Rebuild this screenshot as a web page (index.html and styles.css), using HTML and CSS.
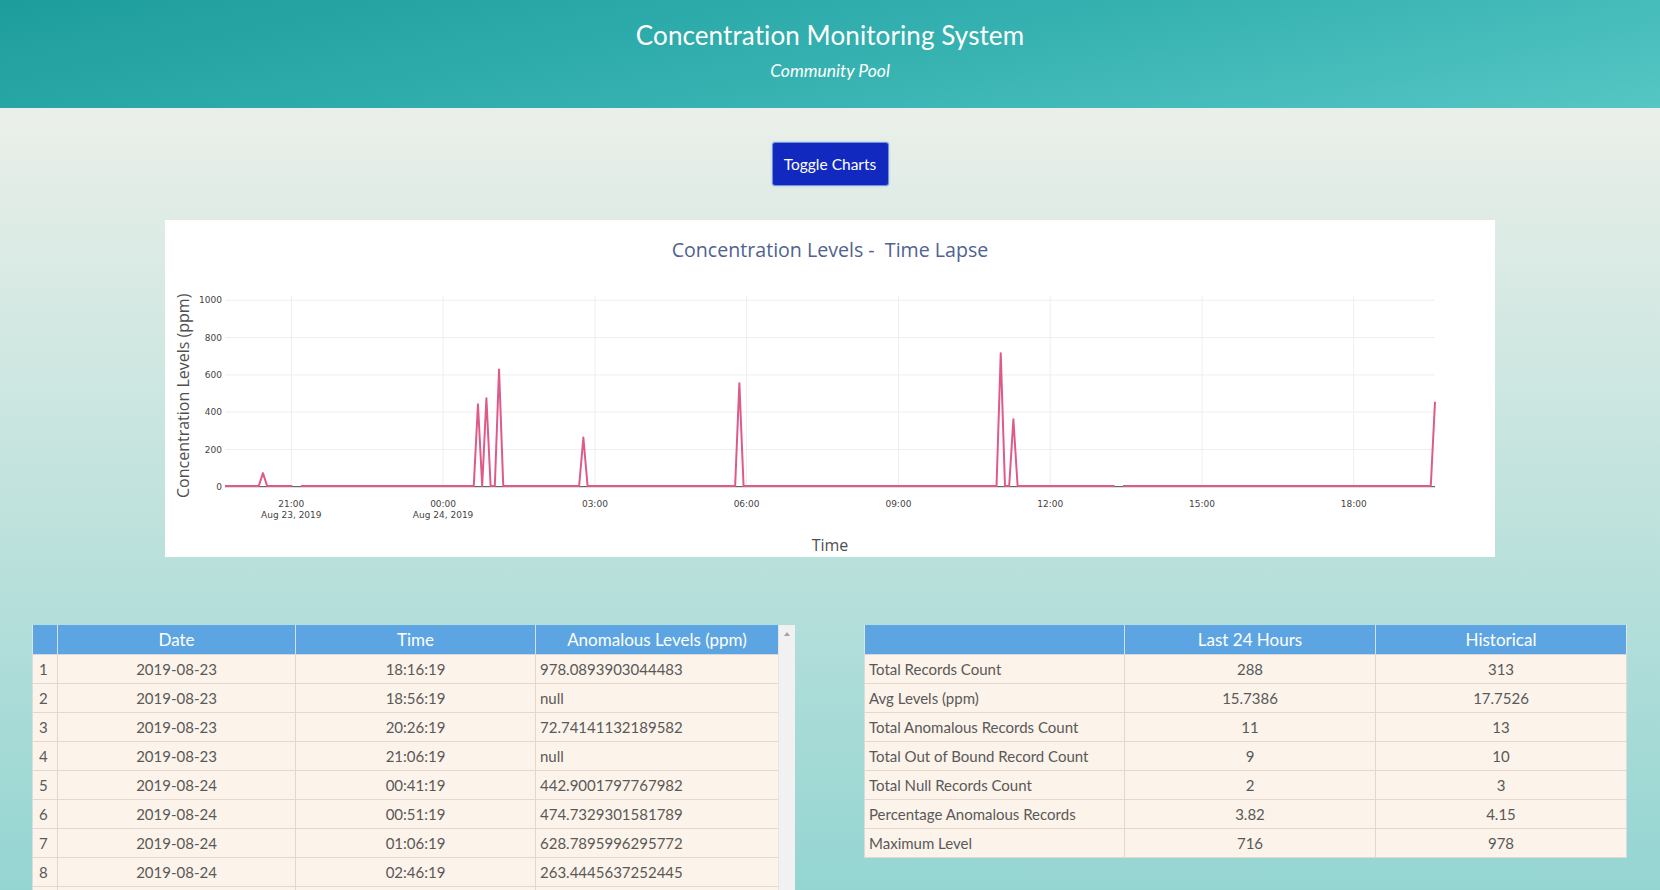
FILE: index.html
```html
<!DOCTYPE html>
<html lang="en">
<head>
<meta charset="utf-8">
<title>Concentration Monitoring System</title>
<link rel="stylesheet" href="styles.css">
</head>
<body>
<header class="site-header">
  <h1 class="site-title">Concentration Monitoring System</h1>
  <p class="site-subtitle">Community Pool</p>
</header>

<main class="page">
  <div class="toolbar">
    <button class="toggle-btn" type="button">Toggle Charts</button>
  </div>

  <section class="chart-card">
    <svg class="chart" width="1330" height="337" viewBox="0 0 1330 337" xmlns="http://www.w3.org/2000/svg">
      <text class="chart-title" x="665" y="37" text-anchor="middle">Concentration Levels -&#160; Time Lapse</text>

      <g class="grid">
        <line x1="126.3" y1="76" x2="126.3" y2="266.7"/>
        <line x1="278.1" y1="76" x2="278.1" y2="266.7"/>
        <line x1="429.9" y1="76" x2="429.9" y2="266.7"/>
        <line x1="581.6" y1="76" x2="581.6" y2="266.7"/>
        <line x1="733.4" y1="76" x2="733.4" y2="266.7"/>
        <line x1="885.2" y1="76" x2="885.2" y2="266.7"/>
        <line x1="1037" y1="76" x2="1037" y2="266.7"/>
        <line x1="1188.7" y1="76" x2="1188.7" y2="266.7"/>
        <line x1="60" y1="80.3" x2="1270" y2="80.3"/>
        <line x1="60" y1="117.6" x2="1270" y2="117.6"/>
        <line x1="60" y1="154.9" x2="1270" y2="154.9"/>
        <line x1="60" y1="192.1" x2="1270" y2="192.1"/>
        <line x1="60" y1="229.4" x2="1270" y2="229.4"/>
      </g>
      <line class="zero-line" x1="60" y1="266.7" x2="1270" y2="266.7"/>

      <g class="trace">
        <polyline points="60,266 93.73,266 97.94,253.1 102.16,266 127.46,266"/>
        <polyline points="135.89,266 308.74,266 312.96,184.2 317.18,266 321.39,178.2 325.61,266 329.82,266 334.04,149.5 338.26,266 414.14,266 418.36,217.6 422.58,266 570.14,266 574.35,163.3 578.57,266 831.53,266 835.74,133.3 839.96,266 844.18,266 848.39,199.2 852.61,266 949.58,266"/>
        <polyline points="958.01,266 1265.78,266 1270,181.7"/>
      </g>

      <g class="ytick">
        <text x="57" y="269.8">0</text>
        <text x="57" y="232.5">200</text>
        <text x="57" y="195.2">400</text>
        <text x="57" y="158">600</text>
        <text x="57" y="120.7">800</text>
        <text x="57" y="83.4">1000</text>
      </g>

      <g class="xtick">
        <text x="126.3" y="286.8">21:00</text>
        <text x="126.3" y="298.4">Aug 23, 2019</text>
        <text x="278.1" y="286.8">00:00</text>
        <text x="278.1" y="298.4">Aug 24, 2019</text>
        <text x="429.9" y="286.8">03:00</text>
        <text x="581.6" y="286.8">06:00</text>
        <text x="733.4" y="286.8">09:00</text>
        <text x="885.2" y="286.8">12:00</text>
        <text x="1037" y="286.8">15:00</text>
        <text x="1188.7" y="286.8">18:00</text>
      </g>

      <text class="axis-title" x="0" y="0" text-anchor="middle" transform="translate(23.5 175.8) rotate(-90)">Concentration Levels (ppm)</text>
      <text class="axis-title" x="665" y="300" dy="30.5" text-anchor="middle">Time</text>
    </svg>
  </section>

  <section class="tables">
    <div class="scroll-box">
      <div class="scroll-content">
        <table class="data-table anomalies">
          <colgroup>
            <col class="c-idx"><col class="c-date"><col class="c-time"><col class="c-val">
          </colgroup>
          <thead>
            <tr><th></th><th>Date</th><th>Time</th><th>Anomalous Levels (ppm)</th></tr>
          </thead>
          <tbody>
            <tr><td class="idx">1</td><td class="ctr">2019-08-23</td><td class="ctr">18:16:19</td><td>978.0893903044483</td></tr>
            <tr><td class="idx">2</td><td class="ctr">2019-08-23</td><td class="ctr">18:56:19</td><td>null</td></tr>
            <tr><td class="idx">3</td><td class="ctr">2019-08-23</td><td class="ctr">20:26:19</td><td>72.74141132189582</td></tr>
            <tr><td class="idx">4</td><td class="ctr">2019-08-23</td><td class="ctr">21:06:19</td><td>null</td></tr>
            <tr><td class="idx">5</td><td class="ctr">2019-08-24</td><td class="ctr">00:41:19</td><td>442.9001797767982</td></tr>
            <tr><td class="idx">6</td><td class="ctr">2019-08-24</td><td class="ctr">00:51:19</td><td>474.7329301581789</td></tr>
            <tr><td class="idx">7</td><td class="ctr">2019-08-24</td><td class="ctr">01:06:19</td><td>628.7895996295772</td></tr>
            <tr><td class="idx">8</td><td class="ctr">2019-08-24</td><td class="ctr">02:46:19</td><td>263.4445637252445</td></tr>
            <tr class="row-below-fold"><td></td><td></td><td></td><td></td></tr>
          </tbody>
        </table>
      </div>
      <div class="scrollbar"><span class="scroll-arrow"></span></div>
    </div>

    <table class="data-table summary">
      <colgroup>
        <col class="s-label"><col class="s-num"><col class="s-num">
      </colgroup>
      <thead>
        <tr><th></th><th>Last 24 Hours</th><th>Historical</th></tr>
      </thead>
      <tbody>
        <tr><td>Total Records Count</td><td class="ctr">288</td><td class="ctr">313</td></tr>
        <tr><td>Avg Levels (ppm)</td><td class="ctr">15.7386</td><td class="ctr">17.7526</td></tr>
        <tr><td>Total Anomalous Records Count</td><td class="ctr">11</td><td class="ctr">13</td></tr>
        <tr><td>Total Out of Bound Record Count</td><td class="ctr">9</td><td class="ctr">10</td></tr>
        <tr><td>Total Null Records Count</td><td class="ctr">2</td><td class="ctr">3</td></tr>
        <tr><td>Percentage Anomalous Records</td><td class="ctr">3.82</td><td class="ctr">4.15</td></tr>
        <tr><td>Maximum Level</td><td class="ctr">716</td><td class="ctr">978</td></tr>
      </tbody>
    </table>
  </section>
</main>
</body>
</html>
```

FILE: styles.css
```css
html, body {
  margin: 0;
  padding: 0;
  height: 890px;
  overflow: hidden;
}

body {
  font-family: "Lato", "Open Sans", sans-serif;
  background: linear-gradient(180deg, #eef0ea 0%, #ebefe9 12%, #bfe2dd 58%, #94d5d2 100%);
  color: #4d4d4d;
}

.site-header {
  height: 108px;
  box-sizing: border-box;
  padding-top: 20px;
  text-align: center;
  color: #ffffff;
  background: linear-gradient(168deg, #1e9d9d 0%, #33b0af 50%, #55c6c4 100%);
}

.site-title {
  margin: 0;
  font-size: 26px;
  line-height: 30px;
  font-weight: 400;
  letter-spacing: 0.1px;
}

.site-subtitle {
  margin: 11px 0 0;
  font-size: 17.5px;
  line-height: 20px;
  font-style: italic;
  font-weight: 400;
}

.page {
  display: flex;
  flex-direction: column;
}

.toolbar {
  display: flex;
  justify-content: center;
  padding-top: 34px;
}

.toggle-btn {
  height: 44px;
  width: 117px;
  padding: 0;
  font-family: "Lato", "Open Sans", sans-serif;
  font-size: 15.5px;
  color: #ffffff;
  background: #1229bf;
  border: 1px solid #6d95dc;
  border-radius: 3px;
  box-shadow: 0 0 2px rgba(120, 150, 220, 0.6);
}

.chart-card {
  align-self: center;
  width: 1330px;
  height: 337px;
  margin-top: 34px;
  background: #ffffff;
}

.chart {
  display: block;
}

.chart-title {
  font-family: "Open Sans", sans-serif;
  font-size: 19.6px;
  fill: #4f6290;
}

.grid line {
  stroke: #eeeeee;
  stroke-width: 1;
}

.zero-line {
  stroke: #444444;
  stroke-width: 1;
}

.trace polyline {
  fill: none;
  stroke: #de5a8b;
  stroke-width: 2;
  stroke-linejoin: round;
}

.ytick text {
  font-family: "DejaVu Sans", sans-serif;
  font-size: 9px;
  fill: #444444;
  text-anchor: end;
}

.xtick text {
  font-family: "DejaVu Sans", sans-serif;
  font-size: 9px;
  fill: #444444;
  text-anchor: middle;
}

.axis-title {
  font-family: "Open Sans", sans-serif;
  font-size: 16px;
  fill: #505050;
}

.tables {
  display: grid;
  grid-template-columns: 764px 762px;
  column-gap: 68px;
  padding-left: 32px;
  margin-top: 68px;
  align-items: start;
}

.scroll-box {
  display: flex;
  height: 265px;
  overflow: hidden;
}

.scroll-content {
  width: 746px;
}

.scrollbar {
  width: 17px;
  background: #f1f1f1;
  border-left: 1px solid #e2e6e6;
  display: flex;
  justify-content: center;
  padding-top: 7px;
  box-sizing: border-box;
}

.scroll-arrow {
  width: 0;
  height: 0;
  border-left: 3.5px solid transparent;
  border-right: 3.5px solid transparent;
  border-bottom: 4px solid #a3a3a3;
}

.data-table {
  border-collapse: collapse;
  table-layout: fixed;
  font-size: 15px;
  color: #595959;
}

.anomalies {
  width: 746px;
}

.summary {
  width: 762px;
}

.c-idx { width: 25px; }
.c-date { width: 238px; }
.c-time { width: 240px; }
.c-val { width: 243px; }

.s-label { width: 260px; }
.s-num { width: 251px; }

.data-table th {
  height: 29px;
  padding: 0 4px;
  box-sizing: border-box;
  background: #5ca5e2;
  color: #ffffff;
  font-weight: 400;
  font-size: 17px;
  text-align: center;
  border-left: 1px solid #cfe2f4;
  border-bottom: 1px solid #d9d9d9;
}

.data-table th:first-child {
  border-left: 1px solid #dfe6e6;
}

.data-table th:last-child {
  border-right: 1px solid #dfe6e6;
}

.data-table td {
  height: 28px;
  padding: 0 4px;
  background: #fcf3ea;
  border: 1px solid #e4d8ce;
  white-space: nowrap;
  overflow: hidden;
}

.data-table td:first-child {
  border-left-color: #d8dcdc;
}

.data-table td:last-child {
  border-right-color: #d8dcdc;
}

.data-table td.idx {
  padding-left: 6px;
}

.data-table td.ctr {
  text-align: center;
}
```
